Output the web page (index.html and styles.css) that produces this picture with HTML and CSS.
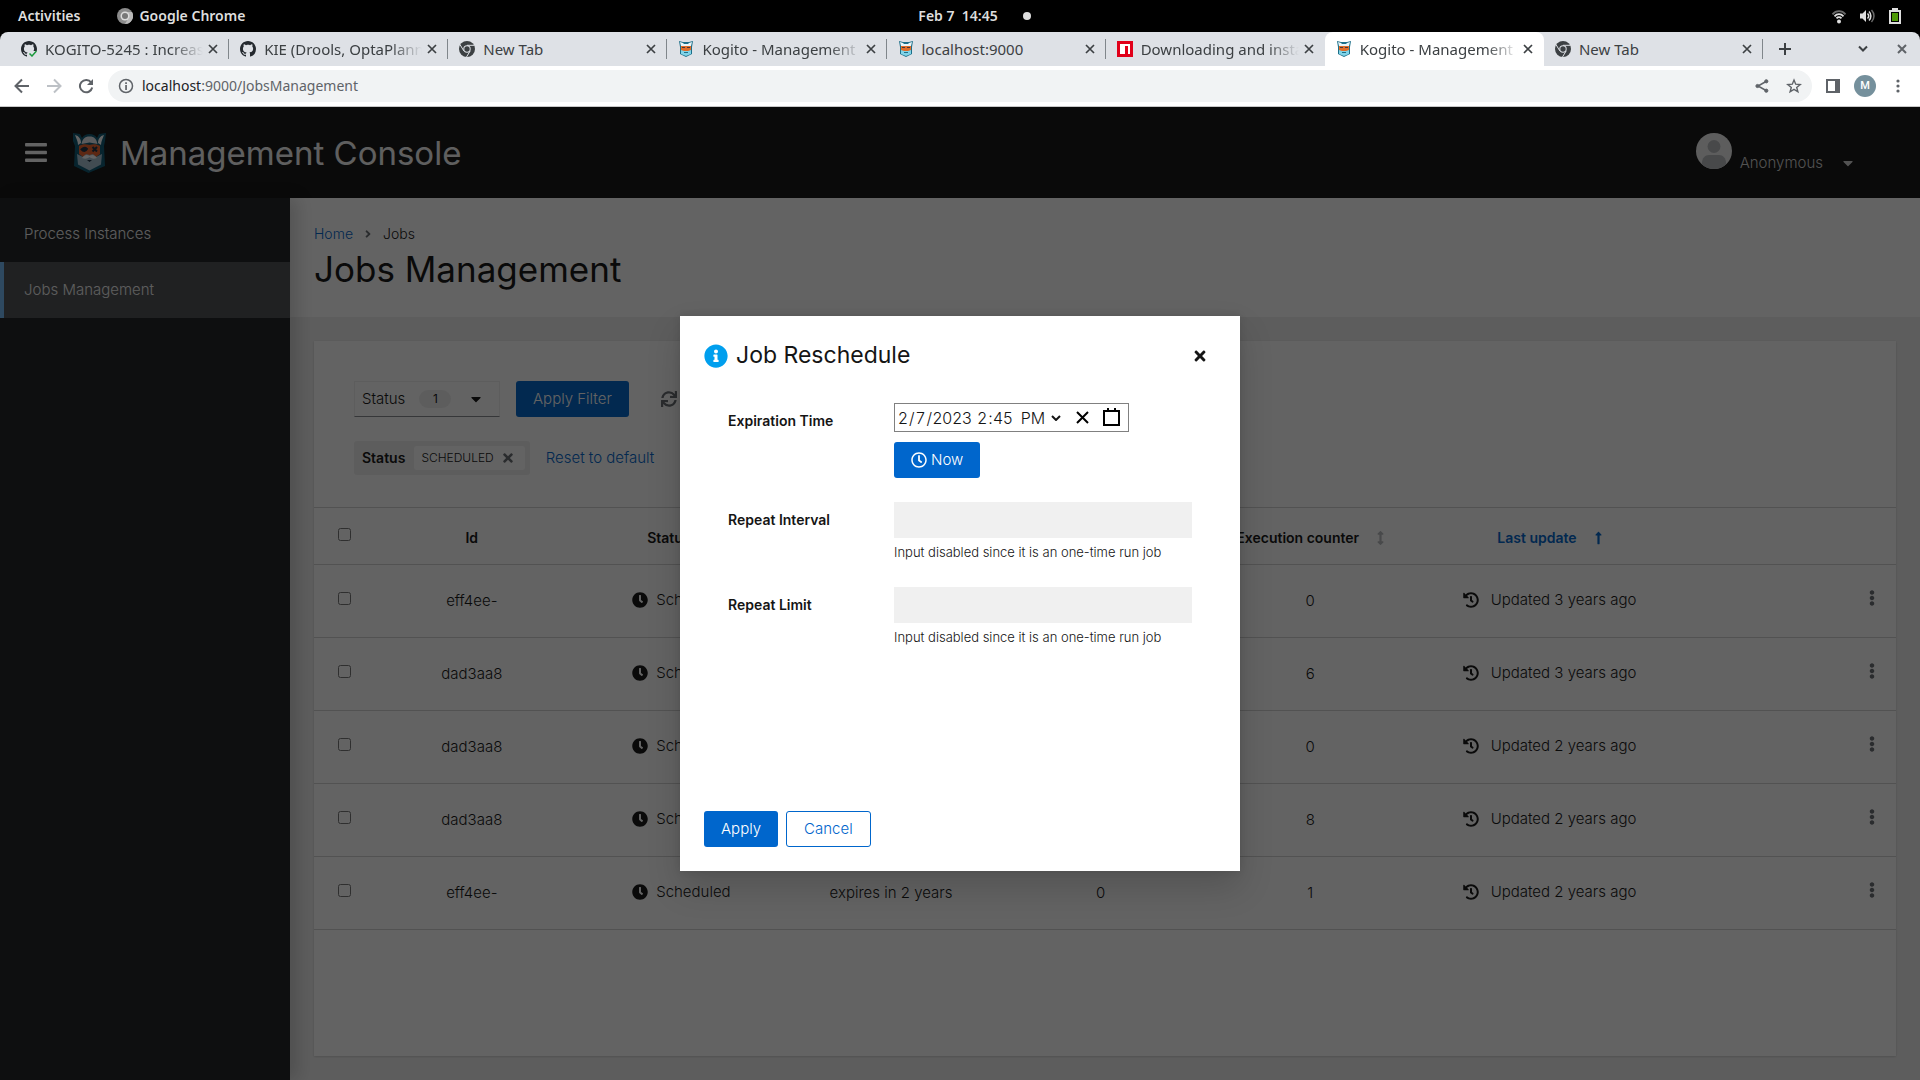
FILE: index.html
```html
<!DOCTYPE html>
<html lang="en">
<head>
<meta charset="utf-8">
<title>Kogito - Management Console</title>
<link rel="stylesheet" href="styles.css">
</head>
<body>
<svg class="sprite" aria-hidden="true">
  <symbol id="i-info" viewBox="0 0 512 512"><path d="M256 8C119.043 8 8 119.083 8 256c0 136.997 111.043 248 248 248s248-111.003 248-248C504 119.083 392.957 8 256 8zm0 110c23.196 0 42 18.804 42 42s-18.804 42-42 42-42-18.804-42-42 18.804-42 42-42zm56 254c0 6.627-5.373 12-12 12h-88c-6.627 0-12-5.373-12-12v-24c0-6.627 5.373-12 12-12h12v-64h-12c-6.627 0-12-5.373-12-12v-24c0-6.627 5.373-12 12-12h64c6.627 0 12 5.373 12 12v100h12c6.627 0 12 5.373 12 12v24z"/></symbol>
  <symbol id="i-times" viewBox="0 0 352 512"><path d="M242.72 256l100.07-100.07c12.28-12.28 12.28-32.19 0-44.48l-22.24-22.24c-12.28-12.28-32.19-12.28-44.48 0L176 189.28 75.93 89.21c-12.28-12.28-32.19-12.28-44.48 0L9.21 111.45c-12.28 12.28-12.28 32.19 0 44.48L109.28 256 9.21 356.07c-12.28 12.28-12.28 32.19 0 44.48l22.24 22.24c12.28 12.28 32.2 12.28 44.48 0L176 322.72l100.07 100.07c12.28 12.28 32.2 12.28 44.48 0l22.24-22.24c12.28-12.28 12.28-32.19 0-44.48L242.72 256z"/></symbol>
  <symbol id="i-caret" viewBox="0 0 320 512"><path d="M31.3 192h257.3c17.8 0 26.7 21.5 14.1 34.1L174.1 354.8c-7.8 7.8-20.5 7.8-28.3 0L17.2 226.1C4.6 213.5 13.5 192 31.3 192z"/></symbol>
  <symbol id="i-bars" viewBox="0 0 448 512"><path d="M16 132h416c8.837 0 16-7.163 16-16V76c0-8.837-7.163-16-16-16H16C7.163 60 0 67.163 0 76v40c0 8.837 7.163 16 16 16zm0 160h416c8.837 0 16-7.163 16-16v-40c0-8.837-7.163-16-16-16H16c-8.837 0-16 7.163-16 16v40c0 8.837 7.163 16 16 16zm0 160h416c8.837 0 16-7.163 16-16v-40c0-8.837-7.163-16-16-16H16c-8.837 0-16 7.163-16 16v40c0 8.837 7.163 16 16 16z"/></symbol>
  <symbol id="i-angle" viewBox="0 0 256 512"><path d="M224.3 273l-136 136c-9.4 9.4-24.6 9.4-33.9 0l-22.6-22.6c-9.4-9.4-9.4-24.6 0-33.9l96.4-96.4-96.4-96.4c-9.4-9.4-9.4-24.6 0-33.9L54.3 103c9.4-9.4 24.6-9.4 33.9 0l136 136c9.5 9.4 9.5 24.6.1 34z"/></symbol>
  <symbol id="i-kebab" viewBox="0 0 192 512"><path d="M96 184c39.8 0 72 32.2 72 72s-32.2 72-72 72-72-32.2-72-72 32.2-72 72-72zM24 80c0 39.8 32.2 72 72 72s72-32.2 72-72S135.8 8 96 8 24 40.2 24 80zm0 352c0 39.8 32.2 72 72 72s72-32.2 72-72-32.2-72-72-72-72 32.2-72 72z"/></symbol>
  <symbol id="i-clock" viewBox="0 0 512 512"><path d="M256,8C119,8,8,119,8,256S119,504,256,504,504,393,504,256,393,8,256,8Zm92.49,313h0l-20,25a16,16,0,0,1-22.49,2.5h0l-67-49.72a40,40,0,0,1-15-31.23V112a16,16,0,0,1,16-16h32a16,16,0,0,1,16,16V256l58,42.5A16,16,0,0,1,348.49,321Z"/></symbol>
  <symbol id="i-clock-o" viewBox="0 0 512 512"><path d="M256 8C119 8 8 119 8 256s111 248 248 248 248-111 248-248S393 8 256 8zm0 448c-110.5 0-200-89.5-200-200S145.5 56 256 56s200 89.5 200 200-89.5 200-200 200zm61.8-104.4l-84.9-61.7c-3.1-2.3-4.9-5.9-4.9-9.7V116c0-6.6 5.4-12 12-12h32c6.600 0 12 5.400 12 12v141.700l66.800 48.600c5.400 3.900 6.500 11.400 2.600 16.800L334.600 349c-3.900 5.300-11.400 6.500-16.800 2.600z"/></symbol>
  <symbol id="i-history" viewBox="0 0 512 512"><path d="M504 255.531c.253 136.640-111.180 248.372-247.820 248.468-59.015.042-113.223-20.530-155.822-54.911-11.077-8.940-11.905-25.541-1.839-35.607l11.267-11.267c8.609-8.609 22.353-9.551 31.891-1.984C173.062 425.135 212.781 440 256 440c101.705 0 184-82.311 184-184 0-101.705-82.311-184-184-184-48.814 0-93.149 18.969-126.068 49.932l50.754 50.754c10.080 10.080 2.941 27.314-11.313 27.314H24c-8.837 0-16-7.163-16-16V38.627c0-14.254 17.234-21.393 27.314-11.314l49.372 49.372C129.209 34.136 189.552 8 256 8c136.810 0 247.747 110.780 248 247.531zm-180.912 78.784l9.823-12.630c8.138-10.463 6.253-25.542-4.210-33.679L288 256.349V152c0-13.255-10.745-24-24-24h-16c-13.255 0-24 10.745-24 24v135.651l65.409 50.874c10.463 8.137 25.541 6.253 33.679-4.210z"/></symbol>
  <symbol id="i-sync" viewBox="0 0 512 512"><path d="M440.650 12.570l4 82.770A247.160 247.160 0 0 0 255.830 8C134.730 8 33.910 94.920 12.290 209.820A12 12 0 0 0 24.090 224h49.050a12 12 0 0 0 11.670-9.260 175.910 175.910 0 0 1 317-56.940l-101.460-4.860a12 12 0 0 0-12.570 12v47.410a12 12 0 0 0 12 12H500a12 12 0 0 0 12-12V12a12 12 0 0 0-12-12h-47.370a12 12 0 0 0-11.980 12.570zM255.830 432a175.610 175.610 0 0 1-146-77.800l101.800 4.870a12 12 0 0 0 12.570-12v-47.400a12 12 0 0 0-12-12H12a12 12 0 0 0-12 12V500a12 12 0 0 0 12 12h47.350a12 12 0 0 0 12-12.600l-4.150-82.570A247.170 247.170 0 0 0 255.830 504c121.110 0 221.930-86.920 243.550-201.820a12 12 0 0 0-11.800-14.180h-49.050a12 12 0 0 0-11.670 9.260A175.860 175.860 0 0 1 255.830 432z"/></symbol>
  <symbol id="i-up" viewBox="0 0 256 512"><path d="M88 166.059V468c0 6.627 5.373 12 12 12h56c6.627 0 12-5.373 12-12V166.059h46.059c21.382 0 32.090-25.851 16.971-40.971l-86.059-86.059c-9.373-9.373-24.569-9.373-33.941 0l-86.059 86.059c-15.119 15.119-4.411 40.971 16.971 40.971H88z"/></symbol>
  <symbol id="i-updown" viewBox="0 0 256 512"><path d="M214.059 377.941H168V134.059h46.059c21.382 0 32.090-25.851 16.971-40.971L144.971 7.029c-9.373-9.373-24.568-9.373-33.941 0L24.971 93.088c-15.119 15.119-4.411 40.971 16.971 40.971H88v243.882H41.941c-21.382 0-32.090 25.851-16.971 40.971l86.059 86.059c9.373 9.373 24.568 9.373 33.941 0l86.059-86.059c15.120-15.119 4.412-40.971-16.970-40.971z"/></symbol>
  <symbol id="i-github" viewBox="0 0 16 16"><path d="M8 0C3.58 0 0 3.58 0 8c0 3.54 2.29 6.53 5.47 7.59.4.07.55-.17.55-.38 0-.19-.01-.82-.01-1.49-2.01.37-2.53-.49-2.69-.94-.09-.23-.48-.94-.82-1.13-.28-.15-.68-.52-.01-.53.63-.01 1.08.58 1.23.82.72 1.21 1.87.87 2.33.66.07-.52.28-.87.51-1.07-1.78-.2-3.64-.89-3.64-3.95 0-.87.31-1.59.82-2.15-.08-.2-.36-1.02.08-2.12 0 0 .67-.21 2.2.82.64-.18 1.32-.27 2-.27.68 0 1.36.09 2 .27 1.53-1.04 2.2-.82 2.2-.82.44 1.1.16 1.92.08 2.12.51.56.82 1.27.82 2.15 0 3.070-1.870 3.750-3.650 3.950.29.25.54.73.54 1.480 0 1.070-.010 1.930-.010 2.200 0 .21.15.46.55.38A8.013 8.013 0 0016 8c0-4.420-3.580-8-8-8z"/></symbol>
  <symbol id="i-chrome" viewBox="0 0 16 16"><circle cx="8" cy="8" r="8" fill="#3c4043"/><path d="M8 4.300H15.500M4.800 9.900L1 3.600M11.200 9.900L7.500 16" stroke="#dee1e6" stroke-width="1"/><circle cx="8" cy="8" r="3.700" fill="#dee1e6"/><circle cx="8" cy="8" r="2.700" fill="#3c4043"/></symbol>
  <symbol id="i-close" viewBox="0 0 10 10"><path d="M1 1l8 8M9 1L1 9" fill="none" stroke="currentColor" stroke-width="1.700"/></symbol>
  <symbol id="i-kogito" viewBox="0 0 35 41">
    <path d="M1 1l7 1 2 4c2-3 4-4 7.500-4s5.500 1 7.500 4l2-4 7-1-1 8-1 5 1 20-16.500 7L2 34l1-20-2-5z" fill="#0f5a75"/>
    <path d="M3 3c4 1 6 4 6 8l-3 2C6 9 4 6 3 3zM32 3c-4 1-6 4-6 8l3 2c0-4 2-7 3-10z" fill="#fff"/>
    <path d="M9.500 12c1-5 3-7.500 8-7.500s7 2.500 8 7.500l-8-1.500z" fill="#e8eaf0"/>
    <path d="M7 14c3-2 7-2 10.500-1 3.500-1 7.500-1 10.500 1v8l-4 3H11l-4-3z" fill="#f0642d"/>
    <path d="M9.500 17.500c2-2 4-2 5.500-.500-1 2.500-4 2.500-5.500.500zM20.500 15l4.500 4.500M25 15l-4.500 4.500" stroke="#1f3346" stroke-width="2" fill="#1f3346"/>
    <path d="M5 22l6 3 3-3 3.500 1 3.500-1 3 3 6-3-1 10.500-11.500 6L6 32.500z" fill="#a9c2d1"/>
    <path d="M10 26c2-3 5-4 7.500-2 2.500-2 5.500-1 7.500 2-3 1-5 1-7.500-1-2.500 2-4.500 2-7.500 1z" fill="#fff"/>
    <path d="M15 28h5l-2.500 2z" fill="#1f3346"/>
  </symbol>
  <symbol id="i-kogito-small" viewBox="0 0 14 16">
    <path d="M0 0l4 1h6l4-1-1 6v7l-6 3-6-3V6z" fill="#1d6f89"/>
    <path d="M1 1l3 1 1 1h4l1-1 3-1-1 4H2z" fill="#e8f4f8"/>
    <path d="M2 5h10v5H2z" fill="#e06c28"/>
    <path d="M3 6h3v1H3zM8 6h3v1H8z" fill="#4a3a3a"/>
    <path d="M2 9l3 1h4l3-1v4l-5 2-5-2z" fill="#7fd3e8"/>
    <path d="M5 11h4v1H5z" fill="#1d6f89"/>
  </symbol>
</svg>

<div class="sysbar">
  <div class="sysbar-left">
    <span>Activities</span>
    <span class="sys-app"><svg class="ic16" viewBox="0 0 16 16"><circle cx="8" cy="8" r="8" fill="#8b8b8b"/><path d="M8 4h7a8 8 0 0 1-7 12l3.500-6z" fill="#b9b9b9"/><circle cx="8" cy="8" r="4.500" fill="#dcdcdc"/><circle cx="8" cy="8" r="3" fill="#787878"/></svg>Google Chrome</span>
  </div>
  <div class="sysbar-mid"><span>Feb 7&nbsp; 14:45</span><i class="dot"></i></div>
  <div class="sysbar-right">
    <svg class="ic16" viewBox="0 0 16 16" fill="none" stroke="#dedede" stroke-width="1.800"><path d="M1.500 6.300c3.500-4.200 9.500-4.200 13 0" stroke="#6a6a6a"/><path d="M3.500 8.300c2.500-2.800 6.500-2.800 9 0M5.500 10.400c1.500-1.600 3.500-1.600 5 0"/><circle cx="8" cy="13.500" r="2" fill="#dedede" stroke="none"/></svg>
    <svg class="ic16" viewBox="0 0 16 16" fill="none" stroke="#dedede" stroke-width="1.500"><path d="M1 5.500h2.500L7 2v12l-3.500-3.500H1z" fill="#dedede" stroke="none"/><path d="M8.500 5.500c1.500 1.500 1.500 3.500 0 5M10 3.500c2.500 2.500 2.500 6.500 0 9"/><path d="M12.500 2c3.300 3.500 3.300 8.500 0 12" stroke="#6a6a6a"/></svg>
    <svg class="ic16" viewBox="0 0 16 16"><path d="M5 0h6v2h3v14H2V2h3z" fill="#dedede"/><path d="M4 4h8v10H4z" fill="#000"/><path d="M5 5h6v8H5z" fill="#4e9a06"/></svg>
  </div>
</div>

<div class="tabstrip">
  <div class="tabs">
    <div class="tab"><svg class="ic16 ink" viewBox="0 0 16 16"><use href="#i-github"/><path d="M8 10h8v6H8z" fill="#dee1e6"/><path d="M8.500 12.500l2.500 2.500 4.500-5" fill="none" stroke="#1a9a3c" stroke-width="1.500"/></svg><span class="tab-title fade">KOGITO-5245 : Increase</span><button class="x" aria-label="Close tab"><svg><use href="#i-close"/></svg></button></div>
    <div class="tab"><svg class="ic16 ink"><use href="#i-github"/></svg><span class="tab-title fade">KIE (Drools, OptaPlann</span><button class="x" aria-label="Close tab"><svg><use href="#i-close"/></svg></button></div>
    <div class="tab"><svg class="ic16"><use href="#i-chrome"/></svg><span class="tab-title">New Tab</span><button class="x" aria-label="Close tab"><svg><use href="#i-close"/></svg></button></div>
    <div class="tab"><svg class="ic16"><use href="#i-kogito-small"/></svg><span class="tab-title fade">Kogito - Management C</span><button class="x" aria-label="Close tab"><svg><use href="#i-close"/></svg></button></div>
    <div class="tab"><svg class="ic16"><use href="#i-kogito-small"/></svg><span class="tab-title">localhost:9000</span><button class="x" aria-label="Close tab"><svg><use href="#i-close"/></svg></button></div>
    <div class="tab"><svg class="ic16" viewBox="0 0 16 16"><path d="M0 0h16v16H0z" fill="#e1001a"/><path d="M3 3h10v10h-2V5H8v8H3z" fill="#fff"/></svg><span class="tab-title fade">Downloading and insta</span><button class="x" aria-label="Close tab"><svg><use href="#i-close"/></svg></button></div>
    <div class="tab active"><svg class="ic16"><use href="#i-kogito-small"/></svg><span class="tab-title fade">Kogito - Management C</span><button class="x" aria-label="Close tab"><svg><use href="#i-close"/></svg></button></div>
    <div class="tab"><svg class="ic16"><use href="#i-chrome"/></svg><span class="tab-title">New Tab</span><button class="x" aria-label="Close tab"><svg><use href="#i-close"/></svg></button></div>
  </div>
  <button class="newtab" aria-label="New tab"><svg class="ic12" viewBox="0 0 12 12"><path d="M6 0v12M0 6h12" stroke="#3c4043" stroke-width="2"/></svg></button>
  <div class="winctl">
    <button class="plain" aria-label="Search tabs"><svg class="ic12" viewBox="0 0 12 12"><path d="M2 3.500l4 4 4-4" fill="none" stroke="#3c4043" stroke-width="2"/></svg></button>
    <button class="plain" aria-label="Close window"><svg class="ic12" viewBox="0 0 12 12"><path d="M2 2l8 8M10 2l-8 8" stroke="#5f6368" stroke-width="2"/></svg></button>
  </div>
</div>

<div class="toolbar">
  <div class="nav-btns">
    <button class="plain" aria-label="Back"><svg class="ic16" viewBox="0 0 16 16" fill="none" stroke="#5f6368" stroke-width="2"><path d="M15 8H2M8 1.500L1.500 8 8 14.500"/></svg></button>
    <button class="plain" aria-label="Forward"><svg class="ic16" viewBox="0 0 16 16" fill="none" stroke="#bdc1c6" stroke-width="2"><path d="M1 8h13M8 1.500L14.500 8 8 14.500"/></svg></button>
    <button class="plain" aria-label="Reload"><svg class="ic16" viewBox="0 0 16 16"><path d="M13.200 4.500A6.200 6.200 0 1 0 14.200 9.500" fill="none" stroke="#5f6368" stroke-width="2"/><path d="M15 1v6H9z" fill="#5f6368"/></svg></button>
  </div>
  <div class="omnibox">
    <svg class="ic16" viewBox="0 0 16 16"><circle cx="8" cy="8" r="6.500" fill="none" stroke="#5f6368" stroke-width="1.500"/><path d="M7.200 7h1.700v5H7.200zM7.200 4.200h1.700v1.700H7.200z" fill="#5f6368"/></svg>
    <span class="url"><b>localhost</b>:9000/JobsManagement</span>
    <button class="plain" aria-label="Share"><svg class="ic16" viewBox="0 0 16 16" fill="#5f6368" stroke="#5f6368"><path d="M12 3.500L4 8l8 4.500" fill="none" stroke-width="1.500"/><circle cx="12.300" cy="3.300" r="1.600"/><circle cx="3.500" cy="8" r="1.600"/><circle cx="12.300" cy="12.700" r="1.600"/></svg></button>
    <button class="plain" aria-label="Bookmark"><svg class="ic16" viewBox="0 0 16 16"><path d="M8 2l1.700 4.200 4.500.3-3.500 2.900 1.200 4.400L8 11.400l-3.900 2.400 1.200-4.400-3.500-2.900 4.500-.3z" fill="none" stroke="#5f6368" stroke-width="1.400"/></svg></button>
  </div>
  <button class="plain" aria-label="Side panel"><svg class="ic14" viewBox="0 0 14 14"><path d="M0 0h14v14H0zM2 2v10h7V2z" fill="#5f6368" fill-rule="evenodd"/></svg></button>
  <button class="profile">M</button>
  <button class="plain" aria-label="Menu"><svg class="ic16" viewBox="0 0 16 16" fill="#5f6368"><circle cx="8" cy="3" r="1.600"/><circle cx="8" cy="8" r="1.600"/><circle cx="8" cy="13" r="1.600"/></svg></button>
</div>

<div class="app">
  <header class="masthead">
    <button class="plain" aria-label="Global navigation"><svg class="burger"><use href="#i-bars"/></svg></button>
    <a class="brand" href="#"><svg class="brand-icon"><use href="#i-kogito"/></svg><span>Management Console</span></a>
    <button class="user"><svg class="avatar" viewBox="0 0 36 36"><defs><clipPath id="av"><circle cx="18" cy="18" r="18"/></clipPath></defs><g clip-path="url(#av)"><path fill="#f0f0f0" d="M0 0h36v36H0z"/><circle cx="18" cy="13.500" r="6.500" fill="#b8bbbe"/><path d="M6 36V30c0-5 3-8 7-8h10c4 0 7 3 7 8v6z" fill="#b8bbbe"/></g></svg><span>Anonymous</span><svg class="caret"><use href="#i-caret"/></svg></button>
  </header>

  <div class="body">
    <nav class="sidebar">
      <a href="#">Process Instances</a>
      <a href="#" class="current">Jobs Management</a>
    </nav>
    <main>
      <section class="page-head">
        <div class="crumbs"><a href="#">Home</a><svg><use href="#i-angle"/></svg><span>Jobs</span></div>
        <h1>Jobs Management</h1>
      </section>
      <section class="card">
        <div class="filters">
          <div class="row">
            <button class="status-toggle"><span>Status</span><span class="count">1</span><svg class="caret"><use href="#i-caret"/></svg></button>
            <button class="btn primary">Apply Filter</button>
            <button class="plain refresh" aria-label="Refresh"><svg class="ic16"><use href="#i-sync"/></svg></button>
          </div>
          <div class="row">
            <div class="chip-group"><strong>Status</strong><span class="chip">SCHEDULED<button class="plain" aria-label="Remove"><svg class="chip-x"><use href="#i-times"/></svg></button></span></div>
            <button class="link">Reset to default</button>
          </div>
        </div>
        <table>
          <colgroup><col class="c-check"><col class="c"><col class="c"><col class="c"><col class="c"><col class="c"><col class="c-last"><col></colgroup>
          <thead>
            <tr>
              <th class="check"><input type="checkbox" aria-label="Select all rows"></th>
              <th>Id</th>
              <th><button class="sort">Status<svg><use href="#i-updown"/></svg></button></th>
              <th><button class="sort">Expiration time<svg><use href="#i-updown"/></svg></button></th>
              <th><button class="sort">Retries<svg><use href="#i-updown"/></svg></button></th>
              <th><button class="sort">Execution counter<svg><use href="#i-updown"/></svg></button></th>
              <th><button class="sort sorted">Last update<svg><use href="#i-up"/></svg></button></th>
              <th></th>
            </tr>
          </thead>
          <tbody>
            <tr><td class="check"><input type="checkbox" aria-label="Select row 1"></td><td>eff4ee-</td><td><span class="cell"><svg><use href="#i-clock"/></svg>Scheduled</span></td><td>expires in 2 years</td><td>0</td><td>0</td><td><span class="cell upd"><svg><use href="#i-history"/></svg>Updated 3 years ago</span></td><td class="act"><button class="plain" aria-label="Actions"><svg class="kebab"><use href="#i-kebab"/></svg></button></td></tr>
            <tr><td class="check"><input type="checkbox" aria-label="Select row 2"></td><td>dad3aa8</td><td><span class="cell"><svg><use href="#i-clock"/></svg>Scheduled</span></td><td>expires in 2 years</td><td>0</td><td>6</td><td><span class="cell upd"><svg><use href="#i-history"/></svg>Updated 3 years ago</span></td><td class="act"><button class="plain" aria-label="Actions"><svg class="kebab"><use href="#i-kebab"/></svg></button></td></tr>
            <tr><td class="check"><input type="checkbox" aria-label="Select row 3"></td><td>dad3aa8</td><td><span class="cell"><svg><use href="#i-clock"/></svg>Scheduled</span></td><td>expires in 2 years</td><td>0</td><td>0</td><td><span class="cell upd"><svg><use href="#i-history"/></svg>Updated 2 years ago</span></td><td class="act"><button class="plain" aria-label="Actions"><svg class="kebab"><use href="#i-kebab"/></svg></button></td></tr>
            <tr><td class="check"><input type="checkbox" aria-label="Select row 4"></td><td>dad3aa8</td><td><span class="cell"><svg><use href="#i-clock"/></svg>Scheduled</span></td><td>expires in 2 years</td><td>0</td><td>8</td><td><span class="cell upd"><svg><use href="#i-history"/></svg>Updated 2 years ago</span></td><td class="act"><button class="plain" aria-label="Actions"><svg class="kebab"><use href="#i-kebab"/></svg></button></td></tr>
            <tr><td class="check"><input type="checkbox" aria-label="Select row 5"></td><td>eff4ee-</td><td><span class="cell"><svg><use href="#i-clock"/></svg>Scheduled</span></td><td>expires in 2 years</td><td>0</td><td>1</td><td><span class="cell upd"><svg><use href="#i-history"/></svg>Updated 2 years ago</span></td><td class="act"><button class="plain" aria-label="Actions"><svg class="kebab"><use href="#i-kebab"/></svg></button></td></tr>
          </tbody>
        </table>
      </section>
    </main>
  </div>

  <div class="backdrop">
    <form class="modal" role="dialog" aria-labelledby="dlg-title">
      <div class="modal-head">
        <svg class="info"><use href="#i-info"/></svg>
        <h2 id="dlg-title">Job Reschedule</h2>
        <button type="button" class="plain" aria-label="Close"><svg class="modal-x"><use href="#i-times"/></svg></button>
      </div>
      <div class="fields">
        <label for="month">Expiration Time</label>
        <div class="stack">
          <div class="datetime">
            <input id="month" class="d1" value="2"><span>/</span><input class="d1" value="7" aria-label="Day"><span>/</span><input class="d4" value="2023" aria-label="Year">
            <input class="d1 hour" value="2" aria-label="Hour"><span>:</span><input class="d2" value="45" aria-label="Minute">
            <span class="ampm"><select aria-label="AM or PM"><option>AM</option><option selected>PM</option></select><svg viewBox="0 0 10 6"><path d="M1 1l4 4 4-4" fill="none" stroke="#151515" stroke-width="2"/></svg></span>
            <button type="button" class="plain" aria-label="Clear"><svg class="ic19" viewBox="0 0 19 19" stroke="#000" stroke-width="2"><path d="M4 4l11 11M15 4L4 15"/></svg></button>
            <button type="button" class="plain" aria-label="Open calendar"><svg class="ic19" viewBox="0 0 19 19" fill="none" stroke="#000" stroke-width="2"><path d="M2 3h15v14H2zM6 0v4M13 0v4"/></svg></button>
          </div>
          <button type="button" class="btn primary now"><svg class="ic16"><use href="#i-clock-o"/></svg>Now</button>
        </div>
        <label for="interval">Repeat Interval</label>
        <div class="stack"><input class="disabled" id="interval" disabled><small>Input disabled since it is an one-time run job</small></div>
        <label for="limit">Repeat Limit</label>
        <div class="stack"><input class="disabled" id="limit" disabled><small>Input disabled since it is an one-time run job</small></div>
      </div>
      <div class="modal-foot">
        <button type="button" class="btn primary">Apply</button>
        <button type="button" class="btn secondary">Cancel</button>
      </div>
    </form>
  </div>
</div>
</body>
</html>
```
FILE: styles.css
```css
* { box-sizing: border-box; }
:root {
  --ui: "Noto Sans", "DejaVu Sans", sans-serif;
  --text: Inter, Roboto, sans-serif;
  --ink: #151515;
  --blue: #0066cc;
}
body {
  margin: 0;
  min-height: 100vh;
  display: flex;
  flex-direction: column;
  font-family: var(--text);
  font-size: 15px;
  font-weight: 300;
  line-height: 24px;
  color: var(--ink);
  background: #000;
}
button, input, select { font: inherit; color: inherit; }
button { border: 0; background: none; padding: 0; display: inline-flex; align-items: center; justify-content: center; }
svg { display: block; flex: none; }
svg:not([fill]) { fill: currentColor; }
a { text-decoration: none; color: var(--blue); }
.sprite { display: none; }
.plain { flex: none; }
.ic12 { width: 12px; height: 12px; }
.ic14 { width: 14px; height: 14px; }
.ic16 { width: 16px; height: 16px; }
.ic19 { width: 19px; height: 19px; }

/* Desktop top bar */
.sysbar {
  height: 32px;
  padding: 0 17px 0 18px;
  display: grid;
  grid-template-columns: 1fr auto 1fr;
  align-items: center;
  font: 600 14px/20px var(--ui);
  color: #dedede;
  background: #000;
}
.sysbar-left { display: flex; gap: 37px; }
.sys-app { display: flex; align-items: center; gap: 6px; }
.sysbar-mid { display: flex; align-items: center; gap: 25px; padding-left: 28px; }
.dot { width: 8px; height: 8px; border-radius: 50%; background: #dedede; }
.sysbar-right { display: flex; justify-content: flex-end; gap: 12px; }

/* Browser chrome */
.tabstrip {
  height: 34px;
  display: flex;
  padding-left: 10px;
  background: #dee1e6;
  border-radius: 8px 8px 0 0;
  font: 400 15px/20px var(--ui);
  color: #3c4043;
}
.tabs { display: flex; flex: 0 1 1753px; min-width: 0; }
.tab {
  position: relative;
  flex: 1 1 0;
  min-width: 0;
  display: flex;
  align-items: center;
  padding: 0 8px 1px 11px;
  gap: 8px;
}
.tab::after {
  content: "";
  position: absolute;
  right: 0;
  top: 7px;
  width: 1px;
  height: 20px;
  background: #80868b;
}
.tab.active { background: #fff; border-radius: 8px 8px 0 0; }
.tab.active::after, .tab:nth-child(6)::after { display: none; }
.ink { color: #24292f; }
.tab-title { flex: 1; min-width: 0; overflow: hidden; white-space: nowrap; }
.fade { margin-right: -6px; -webkit-mask-image: linear-gradient(90deg, #000 80%, transparent); mask-image: linear-gradient(90deg, #000 80%, transparent); }
.x { width: 16px; height: 16px; }
.x svg { width: 10px; height: 10px; }
.newtab { margin-left: 16px; }
.winctl { margin-left: auto; display: flex; gap: 27px; padding-right: 12px; }
.toolbar {
  height: 41px;
  display: flex;
  align-items: center;
  padding: 0 14px;
  gap: 14px;
  background: #fff;
  border-bottom: 1px solid #c8c8c8;
}
.nav-btns { display: flex; gap: 16px; }
.omnibox {
  flex: 1;
  height: 32px;
  border-radius: 16px;
  padding: 0 10px;
  display: flex;
  align-items: center;
  gap: 16px;
  background: #f1f3f4;
}
.url { flex: 1; margin-left: -8px; font: 400 14px/20px var(--ui); color: #5f6368; }
.url b { font-weight: 400; color: #202124; }
.profile {
  width: 22px;
  height: 22px;
  border-radius: 50%;
  background: #75909c;
  color: #fff;
  font: 500 11px/22px Roboto, sans-serif;
}

/* Console */
.app { position: relative; flex: 1; display: flex; flex-direction: column; background: #f0f0f0; }
.masthead {
  height: 91px;
  display: flex;
  align-items: center;
  padding: 0 67px 0 25px;
  background: #151515;
  color: #fff;
}
.burger { width: 22px; height: 25px; }
.brand { display: flex; align-items: center; gap: 13px; margin-left: 25px; color: #f5f5f5; font-size: 33px; line-height: 44px; font-weight: 400; }
.brand-icon { width: 35px; height: 41px; }
.user { margin-left: auto; gap: 8px; padding-top: 3px; color: #d2d2d2; align-items: flex-end; }
.avatar { width: 36px; height: 36px; margin-bottom: 6px; }
.caret { width: 10px; height: 16px; }
.user .caret { margin: 0 0 4px 12px; }
.body { flex: 1; display: flex; }
.sidebar {
  width: 290px;
  flex: none;
  padding-top: 8px;
  background: #212427;
  box-shadow: 8px 0 16px rgba(3, 3, 3, .16);
  z-index: 1;
}
.sidebar a { display: block; padding: 16px 24px; color: #f0f0f0; }
.sidebar .current { background: #4f5255; border-left: 4px solid #73bcf7; padding-left: 20px; }
main { flex: 1; min-width: 0; display: flex; flex-direction: column; }
.page-head { background: #fff; padding: 24px; }
.crumbs { display: flex; align-items: center; gap: 12px; font-size: 14px; line-height: 23px; }
.crumbs svg { width: 6px; height: 12px; color: #6a6e73; }
h1 { margin: 0; font-size: 35px; line-height: 48px; font-weight: 400; }
.card { flex: 1; margin: 24px; background: #fff; box-shadow: 0 1px 2px rgba(3, 3, 3, .12), 0 0 2px rgba(3, 3, 3, .06); }
.filters { padding: 40px 40px 32px; display: grid; gap: 24px; }
.row { display: flex; align-items: center; gap: 16px; }
.status-toggle {
  width: 146px;
  height: 36px;
  padding: 0 18px 0 7px;
  gap: 14px;
  justify-content: flex-start;
  border: 1px solid #f0f0f0;
  border-bottom-color: #8a8d90;
}
.status-toggle .caret { margin-left: auto; }
.count { width: 32px; height: 18px; border-radius: 9px; background: #f0f0f0; font-size: 12px; line-height: 18px; font-weight: 400; text-align: center; }
.btn { height: 36px; padding: 0 17px; border-radius: 3px; white-space: nowrap; }
.primary { background: var(--blue); color: #fff; }
.secondary { border: 1px solid var(--blue); color: var(--blue); }
.refresh { margin-left: 16px; color: #6a6e73; }
.chip-group { height: 34px; padding: 5px 5px 5px 8px; border-radius: 3px; display: flex; align-items: center; gap: 9px; background: #f0f0f0; font-size: 14px; }
.chip-group strong { font-weight: 600; }
.chip { height: 24px; padding: 0 12px 0 7px; display: flex; align-items: center; gap: 9px; border-radius: 3px; background: #fff; font-size: 12px; }
.chip-x { width: 10px; height: 14px; color: #6a6e73; }
.link { color: var(--blue); }

table { width: 100%; table-layout: fixed; border-collapse: collapse; border-top: 1px solid #d2d2d2; text-align: center; }
.c-check { width: 53px; }
.c { width: 13.25%; }
.c-last { width: 17%; }
th { height: 57px; padding: 4px 0 0; font-size: 14px; font-weight: 600; }
td { height: 73px; padding: 0; }
tr { border-bottom: 1px solid #d2d2d2; }
.check { text-align: left; padding: 0 0 6px 24px; }
.check input { margin: 0; width: 13px; height: 13px; vertical-align: middle; }
.sort { gap: 18px; white-space: nowrap; }
.sort svg { width: 7px; height: 14px; color: #b8bbbe; }
.sorted, .sorted svg { color: var(--blue); }
.cell { display: inline-flex; align-items: center; gap: 8px; }
.cell svg { width: 16px; height: 16px; }
.upd { gap: 12px; }
.act { text-align: right; padding-right: 21px; }
.kebab { width: 6px; height: 16px; color: #6a6e73; }

/* Dialog */
.backdrop {
  position: absolute;
  inset: 0;
  z-index: 2;
  display: flex;
  align-items: center;
  justify-content: center;
  background: rgba(3, 3, 3, .62);
}
.modal {
  width: 560px;
  min-height: 555px;
  padding: 24px;
  display: flex;
  flex-direction: column;
  background: #fff;
  box-shadow: 0 16px 32px rgba(3, 3, 3, .16), 0 0 8px rgba(3, 3, 3, .1);
}
.modal-head { display: flex; align-items: center; gap: 8px; height: 31px; }
.info { width: 24px; height: 24px; color: #009fee; }
h2 { flex: 1; margin: 0; font-size: 23px; line-height: 31px; font-weight: 400; }
.modal-x { width: 12px; height: 16px; margin-right: 10px; }
.fields { display: grid; grid-template-columns: 142px 1fr; column-gap: 24px; row-gap: 24px; padding: 32px 24px 0; }
.fields label { padding-top: 7px; font-size: 14px; line-height: 21px; font-weight: 600; }
.stack { display: flex; flex-direction: column; align-items: flex-start; }
.datetime { height: 29px; padding: 0 2px; display: flex; align-items: center; border: 1px solid gray; font-size: 16px; }
.datetime input { border: 0; padding: 0; height: 24px; background: none; text-align: center; }
.datetime .d1 { width: 12px; }
.datetime .d2 { width: 20px; }
.datetime .d4 { width: 40px; }
.hour { margin-left: 4px; }
.ampm { display: flex; align-items: center; margin: 0 7px 0 8px; }
.ampm select { appearance: none; border: 0; padding: 0; background: none; }
.ampm svg { width: 10px; height: 6px; margin-left: 4px; }
.datetime .plain { padding: 0 5px; }
.now { margin-top: 10px; gap: 4px; }
.disabled { width: 100%; height: 36px; border: 0; background: #f0f0f0; }
.stack small { margin-top: 4px; font-size: 13px; line-height: 21px; white-space: nowrap; }
.modal-foot { margin-top: auto; display: flex; gap: 8px; }
```
